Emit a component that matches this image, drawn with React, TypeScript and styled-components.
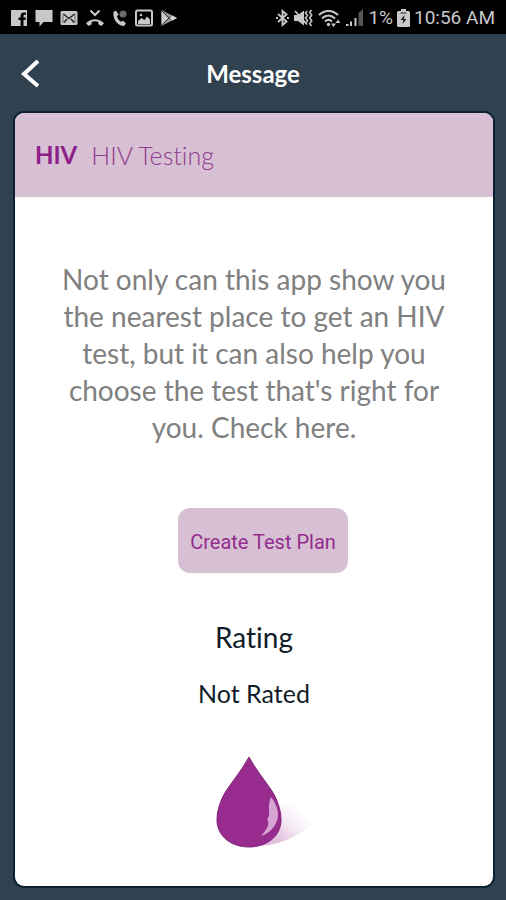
import React from "react";
import styled, { createGlobalStyle } from "styled-components";

const GlobalStyle = createGlobalStyle`
  *, *::before, *::after { box-sizing: border-box; }
  body {
    margin: 0;
    background: #304150;
    font-family: Lato, "Open Sans", sans-serif;
    font-variant-ligatures: none;
  }
`;

const Screen = styled.div`
  min-height: 100vh;
  display: flex;
  flex-direction: column;
  background: #304150;
`;

const StatusBar = styled.div`
  height: 34px;
  padding: 2px 11px 0 10px;
  display: flex;
  align-items: center;
  justify-content: space-between;
  background: #000;
  color: #c8c8c8;
  font: 400 19px/32px Roboto, sans-serif;
`;

const StatusGroup = styled.div<{ $gap: number }>`
  display: flex;
  align-items: center;
  gap: ${(p) => p.$gap}px;
  white-space: nowrap;

  svg { display: block; flex: none; }
`;

const TitleBar = styled.header`
  height: 79px;
  padding: 0 16px;
  display: grid;
  grid-template-columns: 32px 1fr 32px;
  align-items: center;
`;

const BackButton = styled.button`
  height: 40px;
  padding: 0;
  border: 0;
  background: none;
  cursor: pointer;

  svg { display: block; }
`;

const Title = styled.h1`
  margin: 0;
  color: #fff;
  text-align: center;
  font-size: 24px;
  line-height: 32px;
  font-weight: 700;
`;

const Card = styled.main`
  flex: 1;
  margin: 0 13px 14px 15px;
  border-radius: 9px;
  overflow: hidden;
  background: #fff;
  box-shadow: 0 0 0 2px #0b2233;
`;

const CardHeader = styled.div`
  height: 84px;
  padding: 0 20px;
  display: flex;
  align-items: center;
  gap: 14px;
  background: #d8c0d4;
  font-size: 24px;
  line-height: 32px;
`;

const Tag = styled.strong`
  color: #8c1f88;
  font-weight: 700;
`;

const Topic = styled.h2`
  margin: 0;
  color: #8f3d8d;
  font-size: 25px;
  font-weight: 300;
`;

const CardBody = styled.div`
  padding: 64px 36px 28px;
  display: flex;
  flex-direction: column;
  align-items: center;
  text-align: center;
`;

const Message = styled.p`
  margin: 0;
  max-width: 400px;
  color: #808080;
  font-size: 28px;
  line-height: 37px;
`;

const PlanButton = styled.button`
  height: 65px;
  margin: 62px 0 0 18px;
  padding: 2px 12px 0;
  border: 0;
  border-radius: 12px;
  background: #d8c0d4;
  color: #932c8d;
  font: 400 20px/32px Roboto, sans-serif;
  cursor: pointer;
`;

const RatingTitle = styled.h3`
  margin: 48px 0 0;
  color: #101c28;
  font-size: 28px;
  line-height: 32px;
  font-weight: 400;
`;

const RatingValue = styled.p`
  margin: 24px 0 46px;
  color: #101c28;
  font-size: 25px;
  line-height: 32px;
`;

const DropArt = styled.svg`
  display: block;
  margin-left: 12px;
`;

const FacebookIcon = () => (
  <svg width="18" height="18" viewBox="0 0 18 18" aria-hidden="true">
    <path fill="#c8c8c8" d="M1 1h16v16h-3.500v-6h2l.4-2.500h-2.400V7c0-.8.4-1.200 1.300-1.200H16V3.500h-2c-2.400 0-3.400 1.300-3.400 3.300v1.700H8.500V11h2.100v6H1z" />
  </svg>
);
const ChatIcon = () => (
  <svg width="18" height="18" viewBox="0 0 18 18" aria-hidden="true">
    <path fill="#c8c8c8" d="M.5 1h17v12H8.500L4.500 17.500V13h-4z" />
  </svg>
);
const MailIcon = () => (
  <svg width="18" height="18" viewBox="0 0 18 18" aria-hidden="true">
    <rect x=".5" y="2" width="17" height="14" rx="1.500" fill="#c8c8c8" />
    <path d="M3.500 5 9 9.500 14.500 5M4 13.500l3-3.500M14 13.500 11 10" fill="none" stroke="#222" strokeWidth="1.400" />
    <path d="M3 14V4.500M15 14V4.500" stroke="#666" />
  </svg>
);
const MissedCallIcon = () => (
  <svg width="20" height="18" viewBox="0 0 20 18" aria-hidden="true">
    <path d="M5.500 1.500 10 6l4.500-4.500" fill="none" stroke="#c8c8c8" strokeWidth="2" />
    <path fill="#c8c8c8" d="M1 14.200C6 8.800 14 8.800 19 14.200L16.500 17l-3.200-1.700v-2.500c-2.200-.7-4.400-.7-6.600 0v2.500L3.500 17z" />
  </svg>
);
const PhoneIcon = () => (
  <svg width="16" height="18" viewBox="0 0 16 18" aria-hidden="true">
    <path fill="#c8c8c8" d="M1.500 3 4 1.500l2.500 4L5 7.500c.6 2.200 2 4 4 5.200l2.200-1L14 14.500 12 17C6 17 .2 10 1.500 3z" />
    <circle cx="11" cy="5" r="3.600" fill="#666" />
    <path d="m9 7 3.500-3.500" stroke="#888" />
  </svg>
);
const PictureIcon = () => (
  <svg width="18" height="18" viewBox="0 0 18 18" aria-hidden="true">
    <rect x="1" y="1.500" width="16" height="15" rx="1.500" fill="none" stroke="#c8c8c8" strokeWidth="2" />
    <path fill="#c8c8c8" d="m3 12 3.500-3 3 2 2.500-3.500 3 3V15H3z" />
    <circle cx="6" cy="6" r="1.300" fill="#c8c8c8" />
  </svg>
);
const PlayIcon = () => (
  <svg width="18" height="18" viewBox="0 0 18 18" aria-hidden="true">
    <path fill="#999" d="m1.500 1 15.500 8-15.500 8z" />
    <path fill="#c8c8c8" d="M1.500 2 8 9l-6.500 7z" />
    <path d="m2 2 9.500 9.500M2 16l9.500-9.500" fill="none" stroke="#333" />
    <path fill="#d4d4d4" d="m12 6.300 5 2.700-5 2.700L9.500 9z" />
  </svg>
);

const BluetoothIcon = () => (
  <svg width="13" height="18" viewBox="0 0 13 18" aria-hidden="true">
    <path d="m2 5 8.500 7.500-4 3.500V2l4 3.500L2 13" fill="none" stroke="#c8c8c8" strokeWidth="1.900" />
    <path fill="#c8c8c8" d="M0 8h2v2H0zM11 8h2v2h-2z" />
  </svg>
);
const MuteIcon = () => (
  <svg width="21" height="18" viewBox="0 0 21 18" aria-hidden="true">
    <path fill="#c8c8c8" d="M1 6h4l6-4.500v15L5 12H1z" />
    <path d="m2 2 12 13.500" stroke="#c8c8c8" strokeWidth="1.800" />
    <path d="m14 2-1.500 2 2 2.500-2 2.500 2 2.500-1.500 2M18.500 1l-1.800 2.500 2 2.500-2 3 2 3-2 2.500 1.800 2.500" fill="none" stroke="#bdbdbd" strokeWidth="1.700" />
  </svg>
);
const WifiIcon = () => (
  <svg width="23" height="18" viewBox="0 0 23 18" aria-hidden="true">
    <path d="M1 6c5.500-5.500 13.500-5.500 19 0M4 9.500c4-4 9-4 13 0M7 12.500c2.200-2 4.800-2 7 0" fill="none" stroke="#c8c8c8" strokeWidth="2" />
    <circle cx="10.500" cy="15.500" r="1.700" fill="#c8c8c8" />
    <path fill="#c8c8c8" d="M13 14.500h5L15.500 18zM17.500 14l2.500-3.500 2.500 3.500z" />
  </svg>
);
const SignalIcon = () => (
  <svg width="19" height="18" viewBox="0 0 19 18" aria-hidden="true">
    <path fill="#c8c8c8" d="M1 15h2.500v2H1zM5 12.500h2V17H5zM9.500 9h2v8h-2z" />
    <path fill="#555" d="M13.500 4 18 0v17h-4.500z" />
  </svg>
);
const BatteryIcon = () => (
  <svg width="13" height="18" viewBox="0 0 13 18" aria-hidden="true">
    <path fill="#c8c8c8" d="M4 0h5v2h2.500q1.500 0 1.500 1.500v13q0 1.500-1.500 1.500h-10Q0 18 0 16.500v-13Q0 2 1.500 2H4z" />
    <path fill="#222" d="M3.500 3.500h6v1h-6zM7.500 6 3.500 11h2.700L5.500 15l4-5H7z" />
  </svg>
);

const BloodDrop = () => (
  <DropArt width="120" height="96" viewBox="0 0 120 96" role="img" aria-label="Blood drop">
    <defs>
      <linearGradient id="dropShadow" x1="0.4" y1="0.8" x2="0.95" y2="0.4">
        <stop offset="0" stopColor="#e3c0de" />
        <stop offset="0.5" stopColor="#f6eaf5" />
        <stop offset="1" stopColor="#fff" />
      </linearGradient>
    </defs>
    <path fill="url(#dropShadow)" d="M50 91C55 64 72 47 98 48c27 2 20 23-5 34-14 7-28 10-43 9z" />
    <path
      fill="#982b8e"
      stroke="#84257d"
      d="M49 2C42 15 34 24 26 36 20 46 17 56 17 65c0 16 14 27 32 27s32-11 32-27c0-9-3-19-9-29C64 24 56 15 49 2z"
    />
    <path fill="#d6a5d3" d="M71 42c7 9 9 18 5 26-3 6-8 11-15 13 7-8 9-13 6-17 5-4-1-10 4-22z" />
  </DropArt>
);

export default function App() {
  return (
    <Screen>
      <GlobalStyle />
      <StatusBar>
        <StatusGroup $gap={7}>
          <FacebookIcon />
          <ChatIcon />
          <MailIcon />
          <MissedCallIcon />
          <PhoneIcon />
          <PictureIcon />
          <PlayIcon />
        </StatusGroup>
        <StatusGroup $gap={4}>
          <BluetoothIcon />
          <MuteIcon />
          <WifiIcon />
          <SignalIcon />
          <span>1%</span>
          <BatteryIcon />
          <time>10:56 AM</time>
        </StatusGroup>
      </StatusBar>
      <TitleBar>
        <BackButton type="button" aria-label="Back">
          <svg width="32" height="40" viewBox="0 0 32 40" aria-hidden="true">
            <path d="M22 7 8 20l14 12" fill="none" stroke="#fff" strokeWidth="4" />
          </svg>
        </BackButton>
        <Title>Message</Title>
      </TitleBar>
      <Card>
        <CardHeader>
          <Tag>HIV</Tag>
          <Topic>HIV Testing</Topic>
        </CardHeader>
        <CardBody>
          <Message>
            Not only can this app show you the nearest place to get an HIV test, but it can also help
            you choose the test that's right for you. Check here.
          </Message>
          <PlanButton type="button">Create Test Plan</PlanButton>
          <RatingTitle>Rating</RatingTitle>
          <RatingValue>Not Rated</RatingValue>
          <BloodDrop />
        </CardBody>
      </Card>
    </Screen>
  );
}
